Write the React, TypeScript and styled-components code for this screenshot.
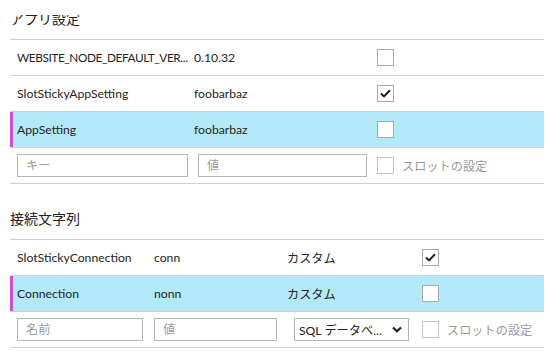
import styled, { createGlobalStyle } from 'styled-components';

const GlobalStyle = createGlobalStyle`
  body {
    margin: 0;
    background: #fff;
    font-family: Lato, "Noto Sans CJK JP", sans-serif;
    color: #252525;
  }
`;

const Panel = styled.div`
  height: 355px;
  padding-top: 15px;
  box-sizing: border-box;
  overflow: hidden;
`;

const Scroller = styled.div`
  height: 340px;
  overflow: hidden;
`;

const Content = styled.div`
  margin: -6px 6px 0 10px;
`;

const Section = styled.section<{ $gap?: number }>`
  margin-top: ${(p) => p.$gap ?? 0}px;
`;

const Title = styled.h3`
  margin: 0;
  padding-bottom: 10px;
  font-size: 14px;
  line-height: 20px;
  font-weight: 400;
  color: #222;
`;

const Table = styled.div`
  border-top: 1px solid #cfcfcf;
`;

const Row = styled.div<{ $cols: string; $selected?: boolean }>`
  display: grid;
  grid-template-columns: ${(p) => p.$cols};
  align-items: center;
  height: 35px;
  padding-left: 7px;
  border-bottom: 1px solid #cfcfcf;
  font-size: 12.2px;
  background: ${(p) => (p.$selected ? '#b3e9f8' : 'transparent')};
  box-shadow: ${(p) => (p.$selected ? 'inset 3px 0 0 #c84fd8' : 'none')};
`;

const Cell = styled.span<{ $tight?: boolean }>`
  white-space: nowrap;
  font-size: ${(p) => (p.$tight ? '11.8px' : 'inherit')};
  letter-spacing: ${(p) => (p.$tight ? '-0.4px' : 'normal')};
`;

const TextInput = styled.input<{ $w: number }>`
  width: ${(p) => p.$w}px;
  height: 23px;
  box-sizing: border-box;
  border: 1px solid #b5b5b5;
  padding: 0 8px;
  font: inherit;
  font-size: 12.2px;
  color: #222;
  background: #fff;
  outline: none;

  &::placeholder {
    color: #9a9a9a;
  }
`;

const Select = styled.div<{ $w: number }>`
  display: flex;
  align-items: center;
  justify-content: space-between;
  width: ${(p) => p.$w}px;
  height: 23px;
  box-sizing: border-box;
  border: 1px solid #b5b5b5;
  padding: 0 6px 0 4px;
  font-size: 12.2px;
  color: #222;
  white-space: nowrap;
`;

const Box = styled.span`
  display: inline-flex;
  align-items: center;
  justify-content: center;
  width: 17px;
  height: 17px;
  box-sizing: border-box;
  border: 1px solid #a9a9a9;
  background: #fff;
`;

const CheckLabel = styled.label`
  display: flex;
  align-items: center;
  gap: 8px;
  color: #9a9a9a;
  font-size: 12.2px;
  white-space: nowrap;
`;

const FadedBox = styled(Box)`
  border-color: #c4c4c4;
`;

const Checkbox = ({ checked }: { checked?: boolean }) => (
  <Box>
    {checked && (
      <svg width="11" height="9" viewBox="0 0 11 9">
        <path d="M1 4.6 L4 7.4 L10 1.3" fill="none" stroke="#1f1f1f" strokeWidth="2" />
      </svg>
    )}
  </Box>
);

const Chevron = () => (
  <svg width="10" height="7" viewBox="0 0 10 7">
    <path d="M1 1.5 L5 5.3 L9 1.5" fill="none" stroke="#1f1f1f" strokeWidth="2.2" />
  </svg>
);

const appCols = '177px 183px auto';
const appInputCols = '181px 179px auto';
const connCols = '137px 133px 135px auto';
const connInputCols = '137px 140px 128px auto';

const appSettings = [
  { key: 'WEBSITE_NODE_DEFAULT_VER...', value: '0.10.32', sticky: false, tight: true },
  { key: 'SlotStickyAppSetting', value: 'foobarbaz', sticky: true },
  { key: 'AppSetting', value: 'foobarbaz', sticky: false, selected: true },
];

const connections = [
  { name: 'SlotStickyConnection', value: 'conn', type: 'カスタム', sticky: true },
  { name: 'Connection', value: 'nonn', type: 'カスタム', sticky: false, selected: true },
];

export default function App() {
  return (
    <>
      <GlobalStyle />
      <Panel>
        <Scroller>
          <Content>
            <Section>
              <Title>アプリ設定</Title>
              <Table>
                {appSettings.map((s) => (
                  <Row key={s.key} $cols={appCols} $selected={s.selected}>
                    <Cell $tight={s.tight}>{s.key}</Cell>
                    <Cell>{s.value}</Cell>
                    <Checkbox checked={s.sticky} />
                  </Row>
                ))}
                <Row $cols={appInputCols}>
                  <TextInput $w={171} placeholder="キー" />
                  <TextInput $w={169} placeholder="値" />
                  <CheckLabel>
                    <FadedBox />
                    スロットの設定
                  </CheckLabel>
                </Row>
              </Table>
            </Section>

            <Section $gap={25}>
              <Title>接続文字列</Title>
              <Table>
                {connections.map((c) => (
                  <Row key={c.name} $cols={connCols} $selected={c.selected}>
                    <Cell>{c.name}</Cell>
                    <Cell>{c.value}</Cell>
                    <Cell>{c.type}</Cell>
                    <Checkbox checked={c.sticky} />
                  </Row>
                ))}
                <Row $cols={connInputCols}>
                  <TextInput $w={126} placeholder="名前" />
                  <TextInput $w={123} placeholder="値" />
                  <Select $w={115}>
                    <span>SQL データベ...</span>
                    <Chevron />
                  </Select>
                  <CheckLabel>
                    <FadedBox />
                    スロットの設定
                  </CheckLabel>
                </Row>
              </Table>
            </Section>
          </Content>
        </Scroller>
      </Panel>
    </>
  );
}
